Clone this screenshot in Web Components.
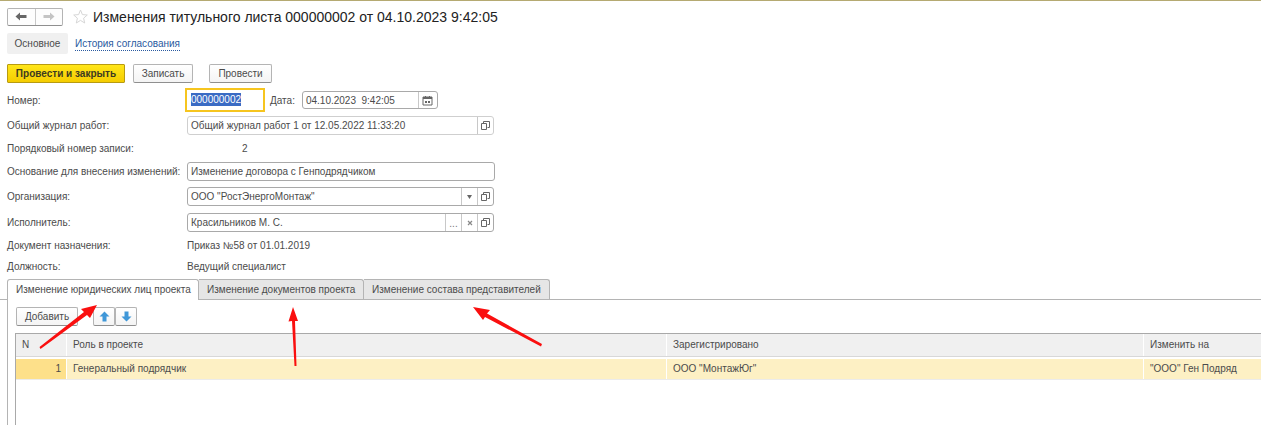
<!DOCTYPE html>
<html lang="ru">
<head>
<meta charset="utf-8">
<title>Изменения титульного листа</title>
<style>
  html, body {
    margin: 0;
    height: 425px;
    overflow: hidden;
    background: #fff;
    font: 10px "Liberation Sans", Arial, sans-serif;
    color: #4b4b4b;
  }
</style>
</head>
<body>
<doc-form></doc-form>

<script>
const OPEN_ICON = `<svg width="11" height="11" viewBox="0 0 11 11" fill="none" stroke="#666"><path d="M3.5 3.5V1.5h6v6H7.5"/><path d="M1.5 3.5h5v6h-5z"/></svg>`;

class CmdButton extends HTMLElement {
  constructor() {
    super();
    const shadowRoot = this.attachShadow({ mode: "open" });
    shadowRoot.innerHTML = `
    <style>
      :host {
        display: inline-flex;
        align-items: center;
        justify-content: center;
        box-sizing: border-box;
        height: 19px;
        border: 1px solid #b4b4b4;
        border-bottom-color: #8f8f8f;
        border-radius: 2px;
        background: linear-gradient(#fff, #f4f4f4);
        color: #4b4b4b;
      }
      :host([primary]) {
        background: linear-gradient(#ffe61a, #f5cc00);
        border-color: #b89b10;
        border-radius: 1px;
        color: #3d3a20;
        font-weight: bold;
      }
    </style>
    <slot></slot>`;
  }
}

class FormRow extends HTMLElement {
  constructor() {
    super();
    const shadowRoot = this.attachShadow({ mode: "open" });
    shadowRoot.innerHTML = `
    <style>
      :host {
        display: flex;
        align-items: center;
        padding-left: 7px;
        color: #4b4b4b;
      }
      .label {
        width: 180px;
        flex: none;
        white-space: nowrap;
      }
    </style>
    <div class="label"></div>
    <slot></slot>`;
    shadowRoot.querySelector(".label").textContent = this.getAttribute("label");
  }
}

class InputField extends HTMLElement {
  constructor() {
    super();
    const shadowRoot = this.attachShadow({ mode: "open" });
    shadowRoot.innerHTML = `
    <style>
      :host {
        display: flex;
        box-sizing: border-box;
        align-items: stretch;
        background: #fff;
        border: 1px solid #a9a9a9;
        border-radius: 3px;
        height: 19px;
      }
      :host([light]) { border-color: #cfcfcf; }
      .value {
        flex: 1;
        padding-left: 3px;
        line-height: 17px;
        white-space: pre;
        color: #4b4b4b;
      }
      ::slotted(span) {
        width: 15px;
        border-left: 1px solid #c8c8c8;
        display: flex;
        align-items: center;
        justify-content: center;
      }
    </style>
    <div class="value"></div>
    <slot></slot>`;
    shadowRoot.querySelector(".value").textContent = this.getAttribute("value");
  }
}

class TabStrip extends HTMLElement {
  constructor() {
    super();
    const shadowRoot = this.attachShadow({ mode: "open" });
    shadowRoot.innerHTML = `
    <style>
      :host {
        display: flex;
        height: 21px;
        box-sizing: border-box;
        padding-left: 7px;
        border-bottom: 1px solid #b4b4b4;
      }
      div {
        box-sizing: border-box;
        height: 20px;
        padding: 0 0 0 8px;
        line-height: 20px;
        border: 1px solid #b4b4b4;
        border-left-width: 0;
        border-bottom: 0;
        border-radius: 0 3px 0 0;
        background: #e6e6e6;
        white-space: nowrap;
      }
      div.on {
        background: #fff;
        height: 21px;
        border-left-width: 1px;
        border-radius: 3px 3px 0 0;
        width: 192px;
      }
    </style>
    <div class="on">Изменение юридических лиц проекта</div>
    <div style="width:165px">Изменение документов проекта</div>
    <div style="width:186px">Изменение состава представителей</div>`;
  }
}

class DataGrid extends HTMLElement {
  constructor() {
    super();
    const shadowRoot = this.attachShadow({ mode: "open" });
    shadowRoot.innerHTML = `
    <style>
      :host {
        display: block;
        margin-left: 7px;
        border-left: 1px solid #a9a9a9;
        border-top: 1px solid #a9a9a9;
        height: 100%;
        box-sizing: border-box;
        overflow: hidden;
      }
      .line {
        display: grid;
        grid-template-columns: 50px 599px 476px 1fr;
        column-gap: 1px;
        height: 22px;
        align-items: stretch;
        background: #fff;
      }
      .line > div {
        padding-left: 6px;
        line-height: 21px;
        white-space: nowrap;
      }
      .head > div { background: #f0f0f0; }
      .head { border-bottom: 1px solid #d8d8d8; }
      .row { margin-top: 2px; height: 20px; border-bottom: 1px solid #ebebeb; }
      .row > div { background: #fdf0c4; line-height: 20px; }
      .row > .num { background: #fde08a; text-align: right; padding: 0 5px 0 0; }
    </style>
    <div class="line head">
      <div>N</div><div>Роль в проекте</div><div>Зарегистрировано</div><div>Изменить на</div>
    </div>
    <div class="line row">
      <div class="num">1</div><div>Генеральный подрядчик</div><div>ООО "МонтажЮг"</div><div>"ООО" Ген Подряд</div>
    </div>`;
  }
}

class RedArrows extends HTMLElement {
  constructor() {
    super();
    const shadowRoot = this.attachShadow({ mode: "open" });
    shadowRoot.innerHTML = `
    <style>
      :host { position: absolute; left: 0; top: 0; pointer-events: none; }
      svg { display: block; }
    </style>
    <svg width="1261" height="425" fill="#fa0f0f">
      <path d="M39.5 346L84 311L81 308L97 304L90 317L87 314L40.5 348Z"/>
      <path d="M294.5 365L292 320L288.5 320.5L293 306L298 320L295 320L296.5 365Z"/>
      <path d="M473 306L490 309L487 312.5L542 343L541 345.5L485 316L483 319Z"/>
    </svg>`;
  }
}

class DocForm extends HTMLElement {
  constructor() {
    super();
    const shadowRoot = this.attachShadow({ mode: "open" });
    shadowRoot.innerHTML = `
    <style>
      :host {
        display: flex;
        flex-direction: column;
        height: 425px;
        border-top: 1px solid #b5aa72;
        box-sizing: border-box;
        position: relative;
      }
      .title-bar {
        display: flex;
        align-items: center;
        height: 19px;
        margin: 6px 0 0 7px;
      }
      .nav {
        display: flex;
        box-sizing: border-box;
        width: 56px;
        height: 18px;
        border: 1px solid #b4b4b4;
        border-bottom-color: #8f8f8f;
        border-radius: 2px;
        background: #fdfdfd;
      }
      .nav span {
        flex: 1;
        display: flex;
        align-items: center;
        justify-content: center;
      }
      .nav span + span { border-left: 1px solid #c8c8c8; }
      .star { margin: 0 5px 0 10px; display: block; }
      h1 {
        margin: 0;
        font-size: 14px;
        font-weight: normal;
        color: #222;
        white-space: nowrap;
      }
      .pages {
        display: flex;
        align-items: center;
        margin: 7px 0 0 7px;
        height: 21px;
      }
      .pages .cur {
        box-sizing: border-box;
        width: 61px;
        height: 21px;
        padding-top: 1px;
        line-height: 20px;
        text-align: center;
        background: #f0f0f0;
        border-radius: 2px;
      }
      .pages .link {
        margin: 2px 0 0 7px;
        color: #2a5aa0;
        border-bottom: 1px dotted #2a5aa0;
        line-height: 12px;
      }
      .commands {
        display: flex;
        margin: 10px 0 0 7px;
        height: 19px;
      }
      .rows { margin-top: 5px; }
      .num-input {
        box-sizing: border-box;
        width: 80px;
        height: 24px;
        margin-left: -2px;
        border: 2px solid #f6c51f;
        padding: 0 0 0 4px;
        line-height: 19px;
        color: #fff;
      }
      .num-input b {
        font-weight: normal;
        background: #3a6bc4;
        display: inline-block;
        line-height: 13px;
      }
      .date-label { margin: 0 7px 0 5px; }
      .static { color: #4b4b4b; }
      .panel {
        flex: 1;
        min-height: 0;
        display: flex;
        flex-direction: column;
      }
      .panel-body {
        flex: 1;
        min-height: 0;
        margin-left: 7px;
        border-left: 1px solid #b4b4b4;
        display: flex;
        flex-direction: column;
      }
      .panel-tools {
        display: flex;
        margin: 7px 0 7px 8px;
        height: 19px;
      }
      .updown {
        box-sizing: border-box;
        width: 22px;
      }
      .grid-wrap { flex: 1; min-height: 0; }
    </style>

    <div class="title-bar">
      <div class="nav">
        <span><svg width="12" height="9" viewBox="0 0 12 9"><path d="M0.5 4.5L5 0.5V3H11.5V6H5V8.5Z" fill="#666"/></svg></span>
        <span><svg width="12" height="9" viewBox="0 0 12 9"><path d="M11.5 4.5L7 0.5V3H0.5V6H7V8.5Z" fill="#c4c4c4"/></svg></span>
      </div>
      <svg class="star" width="15" height="15" viewBox="0 0 15 15"><path d="M7.5 1L9.4 5.6L14.3 6L10.6 9.2L11.7 14L7.5 11.4L3.3 14L4.4 9.2L.7 6L5.6 5.6Z" fill="none" stroke="#d6d6d6"/></svg>
      <h1>Изменения титульного листа 000000002 от 04.10.2023 9:42:05</h1>
    </div>

    <div class="pages">
      <div class="cur">Основное</div>
      <div class="link">История согласования</div>
    </div>

    <div class="commands">
      <cmd-button primary style="width:118px">Провести и закрыть</cmd-button>
      <cmd-button style="width:60px;margin-left:8px">Записать</cmd-button>
      <cmd-button style="width:63px;margin-left:16px">Провести</cmd-button>
    </div>

    <div class="rows">
      <form-row label="Номер:" style="height:24px">
        <div class="num-input"><b>000000002</b></div>
        <div class="date-label">Дата:</div>
        <input-field value="04.10.2023  9:42:05" style="width:136px;height:18px">
          <span style="width:18px"><svg width="11" height="11" viewBox="0 0 11 11"><path d="M1 2h9v8H1z" fill="none" stroke="#666"/><path d="M1 2h9v2H1zM3 1h1v2H3zM7 1h1v2H7zM3 6h2v2H3zM6 6h2v2H6z" fill="#666"/></svg></span>
        </input-field>
      </form-row>
      <form-row label="Общий журнал работ:" style="height:26px">
        <input-field light value="Общий журнал работ 1 от 12.05.2022 11:33:20" style="width:307px">
          <span>${OPEN_ICON}</span>
        </input-field>
      </form-row>
      <form-row label="Порядковый номер записи:" style="height:20px">
        <div class="static" style="margin-left:55px">2</div>
      </form-row>
      <form-row label="Основание для внесения изменений:" style="height:27px">
        <input-field value="Изменение договора с Генподрядчиком" style="width:308px"></input-field>
      </form-row>
      <form-row label="Организация:" style="height:23px">
        <input-field value='ООО "РостЭнергоМонтаж"' style="width:307px">
          <span><svg width="5" height="4" viewBox="0 0 5 4"><path d="M0 0h5L2.5 4z" fill="#666"/></svg></span>
          <span>${OPEN_ICON}</span>
        </input-field>
      </form-row>
      <form-row label="Исполнитель:" style="height:29px">
        <input-field value="Красильников М. С." style="width:307px">
          <span style="color:#777;align-items:flex-end;line-height:14px">...</span>
          <span><svg width="6" height="6" viewBox="0 0 6 6"><path d="M1 1l4 4M5 1l-4 4" stroke="#888" stroke-width="1.2"/></svg></span>
          <span>${OPEN_ICON}</span>
        </input-field>
      </form-row>
      <form-row label="Документ назначения:" style="height:16px">
        <div class="static">Приказ №58 от 01.01.2019</div>
      </form-row>
      <form-row label="Должность:" style="height:26px">
        <div class="static">Ведущий специалист</div>
      </form-row>
    </div>

    <div class="panel">
      <tab-strip></tab-strip>
      <div class="panel-body">
        <div class="panel-tools">
          <cmd-button style="width:62px">Добавить</cmd-button>
          <cmd-button class="updown" style="margin-left:15px">
            <svg width="11" height="11" viewBox="0 0 11 11"><path d="M5.5 .5L10.5 5.5H7.5V10.5H3.5V5.5H.5Z" fill="#3f97d8"/></svg>
          </cmd-button>
          <cmd-button class="updown">
            <svg width="11" height="11" viewBox="0 0 11 11"><path d="M5.5 10.5L10.5 5.5H7.5V.5H3.5V5.5H.5Z" fill="#3f97d8"/></svg>
          </cmd-button>
        </div>
        <div class="grid-wrap"><data-grid></data-grid></div>
      </div>
    </div>
    <red-arrows></red-arrows>`;
  }
}

customElements.define("cmd-button", CmdButton);
customElements.define("form-row", FormRow);
customElements.define("input-field", InputField);
customElements.define("tab-strip", TabStrip);
customElements.define("data-grid", DataGrid);
customElements.define("red-arrows", RedArrows);
customElements.define("doc-form", DocForm);
</script>
</body>
</html>
